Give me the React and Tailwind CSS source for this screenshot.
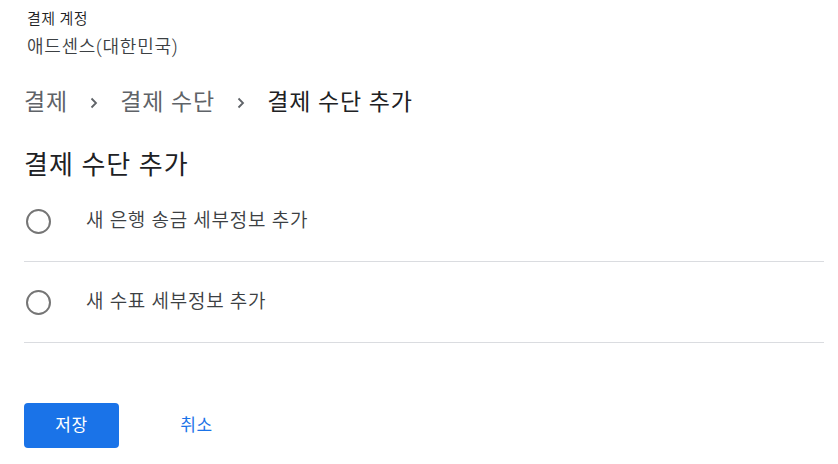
import React from "react";

const Chevron = () => (
  <svg width="8" height="12" viewBox="0 0 8 12" className="mx-[22px] text-[#5f6368]">
    <path d="M1.5 1.5L6 6l-4.5 4.5" fill="none" stroke="currentColor" strokeWidth="1.8" />
  </svg>
);

const Radio = () => (
  <span className="block w-[25px] h-[25px] rounded-full border-2 border-[#757575] ml-[2px] shrink-0" />
);

const Option = ({ label }) => (
  <label className="flex items-center h-[81px] border-b border-[#dadce0] cursor-pointer">
    <Radio />
    <span className="ml-[35px] text-[19px] tracking-[0.04em] font-[350] text-[#3c4043]">{label}</span>
  </label>
);

export default function App() {
  return (
    <div className="min-h-screen bg-white pl-[24px] pr-[14px] pt-[9px] font-['Roboto','Noto_Sans_CJK_KR',sans-serif]">
      <div className="pl-[3px]">
        <p className="text-[15px] leading-[20px] tracking-[0.03em] font-[350] text-[#202124]">결제 계정</p>
        <p className="mt-[6px] text-[18px] leading-[24px] tracking-[0.04em] font-[350] text-[#3c4043]">애드센스(대한민국)</p>
      </div>

      <nav className="mt-[28px] flex items-center h-[32px] text-[23px] tracking-[0.04em]">
        <span className="text-[#5f6368]">결제</span>
        <Chevron />
        <span className="text-[#5f6368]">결제 수단</span>
        <Chevron />
        <span className="text-[#202124]">결제 수단 추가</span>
      </nav>

      <h1 className="mt-[30px] text-[26px] leading-[32px] tracking-[0.04em] text-[#202124]">결제 수단 추가</h1>

      <div className="w-[800px]">
        <Option label="새 은행 송금 세부정보 추가" />
        <Option label="새 수표 세부정보 추가" />
      </div>

      <div className="mt-[60px] flex items-center gap-[30px]">
        <button className="w-[95px] h-[45px] rounded-[4px] bg-[#1a73e8] text-white text-[17px] tracking-[0.03em]">
          저장
        </button>
        <button className="w-[95px] h-[45px] text-[#1a73e8] text-[17px] tracking-[0.03em]">취소</button>
      </div>
    </div>
  );
}
